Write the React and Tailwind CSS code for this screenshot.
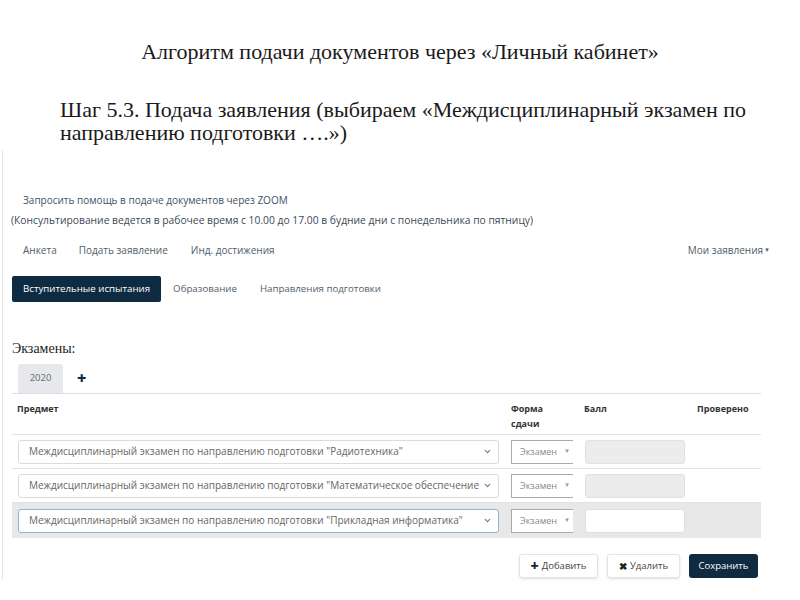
import { ChevronDown } from 'lucide-react';

const serif = { fontFamily: '"Liberation Serif", "Times New Roman", serif' };
const sans = { fontFamily: '"Open Sans", "Noto Sans", sans-serif' };

const rows = [
  { name: 'Междисциплинарный экзамен по направлению подготовки "Радиотехника"', locked: true },
  { name: 'Междисциплинарный экзамен по направлению подготовки "Математическое обеспечение', locked: true },
  { name: 'Междисциплинарный экзамен по направлению подготовки "Прикладная информатика"', locked: false, active: true },
];

function ExamRow({ row }) {
  return (
    <div className={`flex items-center ${row.active ? 'bg-[#e8e8e8] h-[35px]' : 'h-[34px] border-b border-[#e2e2e2]'}`}>
      <div className="w-[494px] pl-[6px] pr-[7px]">
        <div className={`h-[24px] flex items-center rounded-[3px] border bg-white pl-[10px] pr-[6px] ${row.active ? 'border-[#8fb6da]' : 'border-[#dcdcdc]'}`}>
          <span className="flex-1 overflow-hidden whitespace-nowrap text-[10px] text-[#666]">{row.name}</span>
          <ChevronDown size={9} strokeWidth={3} className="text-[#777] ml-[4px] shrink-0" />
        </div>
      </div>
      <div className="w-[73px] pl-[5px]">
        <div className="h-[24px] w-[62px] flex items-center border-l border-t border-b border-[#aaa] bg-white pl-[8px]">
          <span className="text-[9px] text-[#888]">Экзамен</span>
          <span className="ml-[7px] text-[6px] text-[#999]">▼</span>
        </div>
      </div>
      <div className="w-[112px] pl-[6px]">
        <div className={`h-[24px] w-[100px] rounded-[3px] border ${row.locked ? 'bg-[#ececec] border-[#e0e0e0]' : 'bg-white border-[#e0e0e0]'}`} />
      </div>
      <div className="flex-1" />
    </div>
  );
}

export default function App() {
  return (
    <div className="w-[800px] h-[600px] bg-white overflow-hidden">
      <h1 className="pt-[40px] text-center text-[22px] leading-[24px] text-[#1a1a1a]" style={serif}>
        Алгоритм подачи документов через «Личный кабинет»
      </h1>
      <p className="mt-[34px] pl-[60px] pr-[20px] text-[22px] leading-[23px] text-[#1a1a1a]" style={serif}>
        Шаг 5.3. Подача заявления (выбираем «Междисциплинарный экзамен по направлению подготовки ….»)
      </p>

      <div className="mt-[6px] ml-[2px] w-[772px] h-[430px] border-l border-[#e4e4e4]" style={sans}>
        <div className="pt-[43px] pl-[20px] text-[10px] leading-[14px] text-[#3d5266]">
          Запросить помощь в подаче документов через ZOOM
        </div>
        <div className="mt-[6px] pl-[8px] text-[10.3px] leading-[14px] text-[#3d4a57]">
          (Консультирование ведется в рабочее время с 10.00 до 17.00 в будние дни с понедельника по пятницу)
        </div>

        <div className="mt-[16px] flex items-center pl-[20px] pr-[4px] text-[10px] leading-[14px] text-[#4f5d6b]">
          <span>Анкета</span>
          <span className="ml-[22px]">Подать заявление</span>
          <span className="ml-[23px]">Инд. достижения</span>
          <span className="ml-auto flex items-center">
            Мои заявления
            <span className="ml-[1px] text-[6px]">▼</span>
          </span>
        </div>

        <div className="mt-[19px] flex items-center pl-[9px] text-[9.7px]">
          <div className="h-[26px] px-[11px] flex items-center rounded-[2px] bg-[#0e2b42] text-white">
            Вступительные испытания
          </div>
          <span className="ml-[12px] text-[#4f5d6b]">Образование</span>
          <span className="ml-[23px] text-[#4f5d6b]">Направления подготовки</span>
        </div>

        <div className="mt-[38px] pl-[9px] text-[14px] leading-[18px] text-[#222]" style={serif}>
          Экзамены:
        </div>

        <div className="ml-[9px] w-[749px]">
          <div className="mt-[6px] flex items-end border-b border-[#dedede]">
            <div className="ml-[6px] w-[45px] h-[29px] flex items-center justify-center rounded-t-[3px] bg-[#e6e8eb] text-[9.5px] text-[#6b6b6b]">
              2020
            </div>
            <span className="ml-[14px] mb-[7px] text-[16px] font-black leading-[16px] text-[#0e2b42]">+</span>
          </div>

          <div className="h-[41px] flex items-start pt-[7px] border-b border-[#e2e2e2] text-[9px] font-bold leading-[15px] text-[#333]">
            <div className="w-[494px] pl-[5px]">Предмет</div>
            <div className="w-[73px] pl-[5px]">Форма<br />сдачи</div>
            <div className="w-[112px] pl-[5px]">Балл</div>
            <div className="pl-[6px]">Проверено</div>
          </div>

          {rows.map((r, i) => (
            <ExamRow key={i} row={r} />
          ))}

          <div className="mt-[16px] flex justify-end gap-[9px] pr-[3px] text-[9.5px]">
            <button className="h-[24px] w-[79px] flex items-center justify-center gap-[3px] rounded-[3px] border border-[#e4e4e4] bg-white text-[#444] shadow-sm">
              <span className="text-[14px] font-black leading-none text-[#222]">+</span>Добавить
            </button>
            <button className="h-[24px] w-[73px] flex items-center justify-center gap-[3px] rounded-[3px] border border-[#e4e4e4] bg-white text-[#444] shadow-sm">
              <span className="text-[10px] font-black leading-none text-[#222]">✖</span>Удалить
            </button>
            <button className="h-[24px] w-[69px] flex items-center justify-center rounded-[3px] bg-[#0e2b42] text-white">
              Сохранить
            </button>
          </div>
        </div>
      </div>
    </div>
  );
}
